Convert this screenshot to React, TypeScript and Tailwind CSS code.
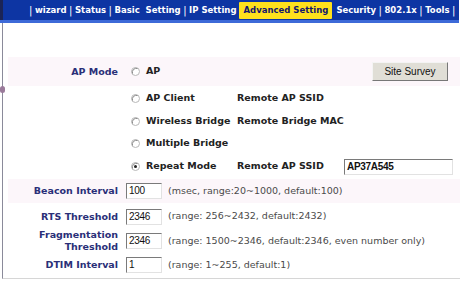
import React from 'react'

const font = "font-['DejaVu_Sans',Verdana,sans-serif]"

function Radio({ checked = false }: { checked?: boolean }) {
  return (
    <svg width="9" height="9" viewBox="0 0 9 9" className="shrink-0">
      <circle cx="4.5" cy="4.5" r="4" fill="#fff" stroke="#b8b8b8" strokeWidth="1" />
      <path d="M1.5 6.5 A4 4 0 0 1 6.5 1.5" fill="none" stroke="#8a8a8a" strokeWidth="1" />
      {checked && <circle cx="4.5" cy="4.5" r="1.5" fill="#222" />}
    </svg>
  )
}

function Field({ value, w = 'w-[36px]' }: { value: string; w?: string }) {
  return (
    <div
      className={`${w} h-[16px] bg-white border border-t-[#7a7a7a] border-l-[#7a7a7a] border-r-[#e2e2e2] border-b-[#e2e2e2] px-[2px] text-[10px] leading-[14px] text-[#111] font-['Liberation_Sans',Arial,sans-serif] tracking-[-0.3px]`}
    >
      {value}
    </div>
  )
}

function Label({ children }: { children: React.ReactNode }) {
  return (
    <div className="w-[111px] pr-[1px] text-right text-[9.5px] leading-[12px] font-bold text-[#2a2f78]">
      {children}
    </div>
  )
}

function Hint({ children }: { children: React.ReactNode }) {
  return <span className="ml-[6px] text-[9.5px] text-[#4a4a4a]">{children}</span>
}

const Bar = () => <span className="font-normal text-[10px]">|</span>

export default function App() {
  const modes = [
    { name: 'AP Client', remote: 'Remote AP SSID', h: 'h-[24px]' },
    { name: 'Wireless Bridge', remote: 'Remote Bridge MAC', h: 'h-[22px]' },
    { name: 'Multiple Bridge', remote: '', h: 'h-[23px]' },
  ]

  return (
    <div className={`w-[476px] h-[283px] bg-white ${font} overflow-hidden`}>
      {/* menu bar */}
      <div className="w-[459px] h-[20px] bg-[#0d35a3] flex items-center text-white text-[8.5px] font-bold whitespace-pre">
        <div className="w-[3px] h-full bg-[#1b2456] mr-[26px]" />
        <div className="flex items-center gap-[2.5px]">
          <Bar />
          <span>wizard</span>
          <Bar />
          <span>Status</span>
          <Bar />
          <span>Basic  Setting</span>
          <Bar />
          <span>IP Setting</span>
        </div>
        <span className="ml-[3px] h-[17px] px-[4px] bg-[#ffe11c] text-[#15186b] flex items-center rounded-[1px]">
          Advanced Setting
        </span>
        <div className="ml-[4px] flex items-center gap-[2.5px]">
          <span>Security</span>
          <Bar />
          <span>802.1x</span>
          <Bar />
          <span>Tools</span>
          <Bar />
        </div>
      </div>
      <div className="w-[459px] h-[3px] bg-[#3d6ad8]" />

      {/* content box */}
      <div className="relative ml-[2px] w-[458px] h-[256px] border-l border-b border-l-[#8a8a9a] border-b-[#d6d6d6] pl-[5px] pt-[34px]">
        <div className="absolute left-[-3px] top-[63px] w-[5px] h-[7px] rounded-full bg-[#9a7a9a]" />

        {/* AP Mode */}
        <div className="h-[29px] bg-[#fcf6fa] flex items-center">
          <Label>AP Mode</Label>
          <div className="ml-[12px] flex items-center gap-[6px] text-[9.5px] font-bold text-[#222]">
            <Radio />
            <span>AP</span>
          </div>
          <div className="ml-auto mr-[12px] w-[76px] h-[19px] bg-[#e0ded6] border border-t-[#f4f4f4] border-l-[#f4f4f4] border-r-[#777] border-b-[#777] flex items-center justify-center text-[10px] text-[#111] font-['Liberation_Sans',Arial,sans-serif]">
            Site Survey
          </div>
        </div>

        {modes.map((m) => (
          <div key={m.name} className={`${m.h} flex items-center text-[9.5px] font-bold text-[#222]`}>
            <div className="w-[111px]" />
            <div className="ml-[12px] w-[106px] flex items-center gap-[6px]">
              <Radio />
              <span>{m.name}</span>
            </div>
            <span>{m.remote}</span>
          </div>
        ))}

        <div className="h-[23px] flex items-center text-[9.5px] font-bold text-[#222]">
          <div className="w-[111px]" />
          <div className="ml-[12px] w-[106px] flex items-center gap-[6px]">
            <Radio checked />
            <span>Repeat Mode</span>
          </div>
          <span className="w-[107px]">Remote AP SSID</span>
          <Field value="AP37A545" w="w-[109px]" />
        </div>

        {/* Beacon */}
        <div className="mt-[1px] h-[24px] bg-[#fcf6fa] flex items-center">
          <Label>Beacon Interval</Label>
          <div className="ml-[7px] flex items-center">
            <Field value="100" />
            <Hint>(msec, range:20~1000, default:100)</Hint>
          </div>
        </div>

        <div className="h-[27px] flex items-center">
          <Label>RTS Threshold</Label>
          <div className="ml-[7px] flex items-center">
            <Field value="2346" />
            <Hint>(range: 256~2432, default:2432)</Hint>
          </div>
        </div>

        <div className="h-[22px] flex items-center">
          <Label>
            Fragmentation
            <br />
            Threshold
          </Label>
          <div className="ml-[7px] flex items-center">
            <Field value="2346" />
            <Hint>(range: 1500~2346, default:2346, even number only)</Hint>
          </div>
        </div>

        <div className="h-[26px] flex items-center">
          <Label>DTIM Interval</Label>
          <div className="ml-[7px] flex items-center">
            <Field value="1" />
            <Hint>(range: 1~255, default:1)</Hint>
          </div>
        </div>
      </div>
    </div>
  )
}
